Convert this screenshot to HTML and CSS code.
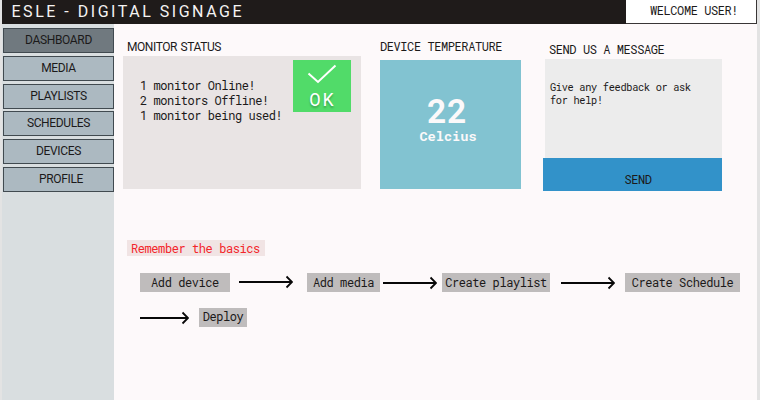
FILE: index.html
```html
<!DOCTYPE html>
<html lang="en">
<head>
<meta charset="utf-8">
<title>ESLE - Digital Signage</title>
<link rel="stylesheet" href="styles.css">
</head>
<body>
<div class="app">
  <header class="topbar">
    <h1 class="brand">ESLE - DIGITAL SIGNAGE</h1>
    <div class="welcome">WELCOME USER!</div>
  </header>
  <div class="body">
    <nav class="sidebar">
      <a class="nav-item active">DASHBOARD</a>
      <a class="nav-item">MEDIA</a>
      <a class="nav-item">PLAYLISTS</a>
      <a class="nav-item">SCHEDULES</a>
      <a class="nav-item">DEVICES</a>
      <a class="nav-item profile">PROFILE</a>
    </nav>
    <main class="main">
      <div class="cards">
        <section class="monitor">
          <h2 class="heading sans">MONITOR STATUS</h2>
          <div class="status-box">
            <div class="status-lines">
              <div>1 monitor Online!</div>
              <div>2 monitors Offline!</div>
              <div>1 monitor being used!</div>
            </div>
            <div class="ok">
              <svg class="check" width="30" height="21" viewBox="0 0 30 21"><path d="M1.500 10.500 11 19 28.500 2.500" fill="none" stroke="#fff" stroke-width="2"/></svg>
              <span class="ok-text">OK</span>
            </div>
          </div>
        </section>
        <section class="temperature">
          <h2 class="heading">DEVICE TEMPERATURE</h2>
          <div class="temp-box">
            <div class="degrees">22</div>
            <div class="unit">Celcius</div>
          </div>
        </section>
        <section class="message">
          <h2 class="heading">SEND US A MESSAGE</h2>
          <div class="feedback">Give any feedback or ask<br>for help!</div>
          <div class="send">SEND</div>
        </section>
      </div>
      <div class="basics">Remember the basics</div>
      <div class="steps">
        <span class="step add-device">Add device</span>
        <svg class="arrow first" width="54" height="14" viewBox="0 0 54 14"><path d="M0 7H53M47.500 1.500 53 7 47.500 12.500"/></svg>
        <span class="step add-media">Add media</span>
        <svg class="arrow second" width="54" height="14" viewBox="0 0 54 14"><path d="M0 7H53M47.500 1.500 53 7 47.500 12.500"/></svg>
        <span class="step playlist">Create playlist</span>
        <svg class="arrow third" width="54" height="14" viewBox="0 0 54 14"><path d="M0 7H53M47.500 1.500 53 7 47.500 12.500"/></svg>
        <span class="step schedule">Create Schedule</span>
      </div>
      <div class="steps last-row">
        <svg class="arrow" width="49" height="14" viewBox="0 0 49 14"><path d="M0 7H48M42.500 1.500 48 7 42.500 12.500"/></svg>
        <span class="step deploy">Deploy</span>
      </div>
    </main>
  </div>
</div>
</body>
</html>
```
FILE: styles.css
```css
* { box-sizing: border-box; }
body {
  margin: 0;
  background: #e3e3e3;
  color: #1c1a1a;
  font: 12px/15px "Roboto Mono", "DejaVu Sans Mono", monospace;
  letter-spacing: -.42px;
  white-space: nowrap;
}
.app {
  width: 755px;
  height: 400px;
  margin-left: 2px;
  background: #fdf9fa;
  overflow: hidden;
}
.topbar {
  display: flex;
  height: 24px;
  background: #1f1b1a;
}
.brand {
  flex: 1;
  margin: 0;
  padding-left: 9.500px;
  color: #f5f3f3;
  font: 400 16px/23px Roboto, sans-serif;
  letter-spacing: 2.52px;
}
.welcome {
  width: 131px;
  padding-left: 24px;
  background: #fff;
  border: solid #393636;
  border-width: 0 1px 1px 0;
  line-height: 21px;
}
.body { display: flex; height: 376px; }
.sidebar {
  display: flex;
  flex-direction: column;
  gap: 2.8px;
  width: 112px;
  padding: 4px 0 0 1px;
  background: #d9dee0;
}
.nav-item {
  height: 25px;
  flex: none;
  border: 1px solid #414a50;
  background: #acb9c1;
  font: 12px/23px Roboto, sans-serif;
  letter-spacing: -.35px;
  text-align: center;
}
.nav-item.active { background: #70797f; }
.nav-item.profile { padding-left: 5px; line-height: 22px; }
.main { flex: 1; padding-left: 9px; }
.cards { display: flex; height: 168px; }
.heading { margin: 0; font-size: 12px; font-weight: 400; line-height: 15px; }
.heading.sans { padding-left: 4px; font: 12px/17px Roboto, sans-serif; height: 15px; letter-spacing: -.43px; word-spacing: 1px; }
.monitor { width: 238px; padding-top: 15px; }
.status-box {
  display: flex;
  justify-content: space-between;
  height: 133px;
  margin-top: 2px;
  padding: 4px 10px 0 17px;
  background: #e9e4e4;
}
.status-lines { padding-top: 18px; }
.ok {
  display: flex;
  flex-direction: column;
  align-items: center;
  width: 58px;
  height: 52px;
  background: #51db69;
}
.check { flex: none; margin-top: 3px; }
.ok-text {
  height: 28px;
  padding-left: 1px;
  color: #fff;
  font-size: 19px;
  font-weight: 400;
  line-height: 30px;
  letter-spacing: 1.8px;
  text-shadow: 0 2px 2px rgba(0, 0, 0, .25);
}
.temperature { width: 141px; margin-left: 19px; padding-top: 15px; }
.temp-box {
  height: 129px;
  margin-top: 6px;
  padding-top: 31px;
  background: #82c3d1;
  color: #fcf9fa;
  font-weight: 700;
  text-align: center;
  letter-spacing: 0;
}
.degrees { padding-right: 7px; font-size: 33.5px; line-height: 38px; }
.unit { padding-right: 5px; font-size: 13.6px; line-height: 14px; }
.message { width: 179px; margin-left: 22px; padding-top: 18px; }
.message .heading { padding-left: 6px; }
.feedback {
  height: 99px;
  margin: 2px 0 0 2px;
  padding: 22px 0 0 5px;
  background: #ececec;
  font-size: 10.3px;
  letter-spacing: -.31px;
  line-height: 13px;
}
.send {
  height: 33px;
  padding: 5px 0 0 11px;
  background: #3292c9;
  line-height: 33px;
  text-align: center;
}
.basics {
  width: 138px;
  height: 16px;
  margin: 48px 0 0 4px;
  padding-left: 4px;
  background: #f1e4e4;
  color: #f3262b;
  line-height: 16px;
}
.steps {
  display: flex;
  align-items: center;
  height: 19px;
  margin: 17px 0 0 17px;
}
.last-row { margin-top: 16px; }
.step {
  flex: none;
  height: 19px;
  background: #bfbcbc;
  line-height: 19px;
  text-align: center;
}
.add-device { width: 90px; }
.add-media { width: 73px; }
.playlist { width: 108px; }
.schedule { width: 115px; }
.deploy { width: 48px; margin-left: 10px; line-height: 17px; }
.arrow { flex: none; fill: none; stroke: #080808; stroke-width: 1.8; }
.first { margin: 0 14px 2px 9px; }
.second { margin: 0 5px 0 3px; }
.third { margin: 1px 10px 0 11px; }
```
